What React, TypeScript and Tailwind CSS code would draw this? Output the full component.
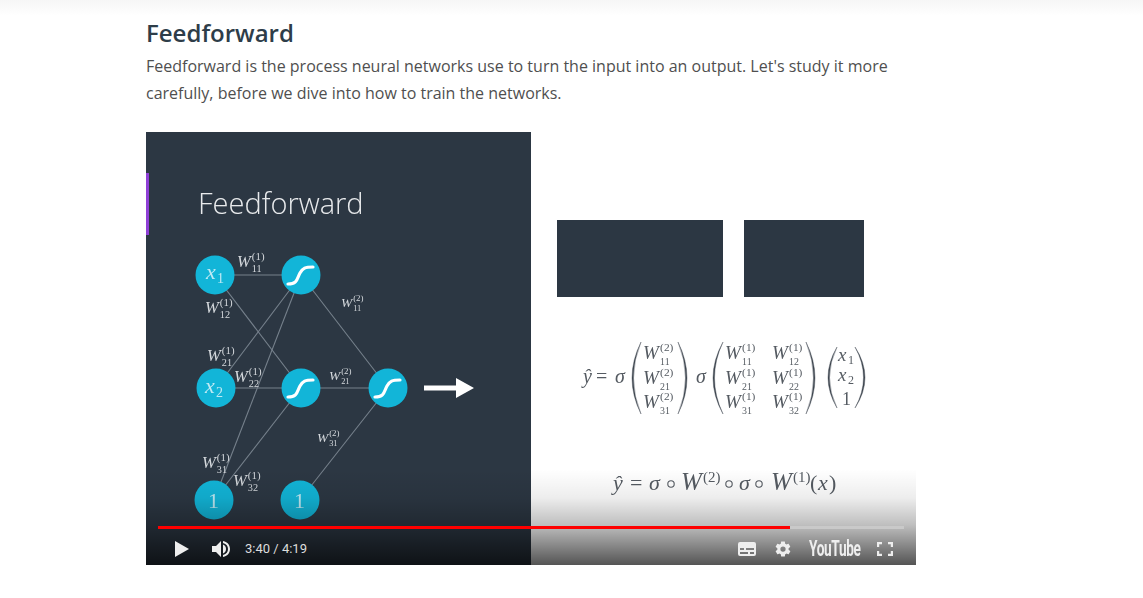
import React from "react";

const mathFont = "'Liberation Serif', 'DejaVu Serif', serif";

function W({ x, y, sub, sup, s = 16.5, fill = "#d5d9dd" }: { x: number; y: number; sub: string; sup: string; s?: number; fill?: string }) {
  const small = s <= 17;
  return (
    <g fontFamily={mathFont} fill={fill}>
      <text x={x} y={y} fontSize={s} fontStyle="italic">W</text>
      <text x={x + s * 0.9} y={y - s * 0.42} fontSize={s * (small ? 0.66 : 0.6)}>({sup})</text>
      <text x={x + s * 0.9} y={y + s * 0.32} fontSize={s * (small ? 0.62 : 0.52)}>{sub}</text>
    </g>
  );
}

function Sigmoid({ cx, cy }: { cx: number; cy: number }) {
  return (
    <path
      d={`M${cx - 13} ${cy + 9} C${cx - 3} ${cy + 9} ${cx - 4} ${cy + 3} ${cx - 1} ${cy - 2} C${cx + 2} ${cy - 7} ${cx + 4} ${cy - 8} ${cx + 12} ${cy - 8}`}
      fill="none"
      stroke="#fff"
      strokeWidth={3.2}
      strokeLinecap="round"
    />
  );
}

function Network() {
  const line = "#76818c";
  const nodes: [number, number][] = [
    [215, 275], [301, 275], [216, 388], [301, 388], [388, 388], [214, 500], [300, 500],
  ];
  const edges: [number, number, number, number][] = [
    [215, 275, 301, 275], [215, 275, 301, 388], [216, 388, 301, 275], [216, 388, 301, 388],
    [214, 500, 301, 275], [214, 500, 301, 388], [301, 275, 388, 388], [301, 388, 388, 388], [300, 500, 388, 388],
  ];
  return (
    <svg viewBox="146 132 385 433" className="absolute inset-0 h-full w-full blur-[0.4px]">
      <text x={198} y={214} fontFamily="'Open Sans', sans-serif" fontWeight={300} fontSize={29} fill="#e8eaec">Feedforward</text>
      {edges.map(([a, b, c, d], i) => (
        <line key={i} x1={a} y1={b} x2={c} y2={d} stroke={line} strokeWidth={1.1} />
      ))}
      {nodes.map(([cx, cy], i) => (
        <circle key={i} cx={cx} cy={cy} r={19.5} fill="#12b5d8" />
      ))}
      <g fontFamily={mathFont} fill="#bfeaf4">
        <text x={206} y={279} fontSize={22} fontStyle="italic">x</text>
        <text x={217} y={283} fontSize={14}>1</text>
        <text x={205} y={393} fontSize={22} fontStyle="italic">x</text>
        <text x={216} y={397} fontSize={14}>2</text>
        <text x={208} y={508} fontSize={22}>1</text>
        <text x={294} y={508} fontSize={22}>1</text>
      </g>
      <Sigmoid cx={301} cy={275} />
      <Sigmoid cx={301} cy={388} />
      <Sigmoid cx={388} cy={388} />
      <path d="M424 385.5H456V378L474 388L456 398V390.5H424Z" fill="#fff" />
      <W x={237} y={267} sub="11" sup="1" />
      <W x={205} y={313} sub="12" sup="1" />
      <W x={207} y={361} sub="21" sup="1" />
      <W x={234} y={382} sub="22" sup="1" />
      <W x={202} y={468} sub="31" sup="1" />
      <W x={233} y={486} sub="32" sup="1" />
      <W x={341} y={307} sub="11" sup="2" s={13.5} />
      <W x={329} y={380} sub="21" sup="2" s={13.5} />
      <W x={317} y={442} sub="31" sup="2" s={13.5} />
    </svg>
  );
}

function Paren({ tip, bulge, y, h }: { tip: number; bulge: number; y: number; h: number }) {
  const outer = 2 * bulge - tip;
  const inner = outer + (tip > bulge ? 3 : -3);
  return (
    <path
      d={`M${tip} ${y} Q${outer} ${y + h / 2} ${tip} ${y + h} Q${inner} ${y + h / 2} ${tip} ${y}Z`}
      fill="#3f4750"
      stroke="#3f4750"
      strokeWidth={0.4}
    />
  );
}

function Formula() {
  const fill = "#555b62";
  const rows = [359, 384, 408];
  const dots = [667, 725, 755];
  return (
    <svg viewBox="531 132 385 433" className="absolute inset-0 h-full w-full blur-[0.4px]">
      <g fontFamily={mathFont} fill={fill}>
        <text x={583} y={383} fontSize={20} fontStyle="italic">ŷ</text>
        <text x={596} y={383} fontSize={20}>=</text>
        <text x={615} y={383} fontSize={20} fontStyle="italic">σ</text>
        <text x={696} y={383} fontSize={20} fontStyle="italic">σ</text>
        <text x={838} y={361} fontSize={19} fontStyle="italic">x</text>
        <text x={848} y={364} fontSize={12}>1</text>
        <text x={838} y={381} fontSize={19} fontStyle="italic">x</text>
        <text x={848} y={384} fontSize={12}>2</text>
        <text x={842} y={405} fontSize={18}>1</text>
        <text x={613} y={490} fontSize={22} fontStyle="italic">ŷ</text>
        <text x={630} y={490} fontSize={22}>=</text>
        <text x={649} y={490} fontSize={22} fontStyle="italic">σ</text>
        <text x={681} y={490} fontSize={25} fontStyle="italic">W</text>
        <text x={703} y={482} fontSize={15}>(2)</text>
        <text x={739} y={490} fontSize={22} fontStyle="italic">σ</text>
        <text x={771} y={490} fontSize={25} fontStyle="italic">W</text>
        <text x={793} y={482} fontSize={15}>(1)</text>
        <text x={810} y={490} fontSize={22}>(</text>
        <text x={818} y={490} fontSize={22} fontStyle="italic">x</text>
        <text x={829} y={490} fontSize={22}>)</text>
      </g>
      {dots.map((cx) => (
        <circle key={cx} cx={cx + 4} cy={484} r={3.2} fill="none" stroke={fill} strokeWidth={1.1} />
      ))}
      <Paren tip={641} bulge={632} y={342} h={72} />
      <Paren tip={678} bulge={687} y={342} h={72} />
      <Paren tip={723} bulge={713} y={342} h={72} />
      <Paren tip={806} bulge={815} y={342} h={72} />
      <Paren tip={837} bulge={828} y={347} h={61} />
      <Paren tip={855} bulge={865} y={347} h={61} />
      {rows.map((y, i) => (
        <React.Fragment key={i}>
          <W x={643} y={y} sub={`${i + 1}1`} sup="2" s={19} fill={fill} />
          <W x={725} y={y} sub={`${i + 1}1`} sup="1" s={19} fill={fill} />
          <W x={772} y={y} sub={`${i + 1}2`} sup="1" s={19} fill={fill} />
        </React.Fragment>
      ))}
    </svg>
  );
}

function Controls() {
  return (
    <div className="absolute inset-x-0 bottom-0 h-[96px] bg-[linear-gradient(to_bottom,rgba(0,0,0,0)_0%,rgba(0,0,0,0.07)_30%,rgba(0,0,0,0.25)_58%,rgba(0,0,0,0.42)_75%,rgba(0,0,0,0.67)_100%)]">
      <div className="absolute bottom-0 left-0 right-0 flex h-[39px] flex-col px-3">
        <div className="flex h-[3px] w-full bg-[#c9c9c9]">
          <div className="h-full w-[632px] bg-[#ff0000]" />
        </div>
        <div className="flex h-[36px] items-center pl-[17px] pr-[11px] pt-[3px]">
          <svg viewBox="0 0 14 16" className="h-4 w-[14px]"><path d="M0 0L14 8L0 16Z" fill="#eee" /></svg>
          <svg viewBox="0 0 18 18" className="ml-[23px] h-[18px] w-[18px]">
            <path d="M0 6H4L9 1V17L4 12H0Z" fill="#eee" />
            <path d="M11 4.500C13 5.300 14 7 14 9S13 12.700 11 13.500Z" fill="#eee" />
            <path d="M11 1V3C14.500 3.800 16 6.500 16 9S14.500 14.200 11 15V17C16 16 18 12.500 18 9S16 2 11 1Z" fill="#eee" />
          </svg>
          <span className="ml-[15px] font-['Roboto',sans-serif] text-[13px] text-[#ddd]">3:40 / 4:19</span>
          <div className="ml-auto flex items-center">
            <svg viewBox="0 0 18 14" className="h-[14px] w-[18px]">
              <path fillRule="evenodd" d="M2 0H16Q18 0 18 2V12Q18 14 16 14H2Q0 14 0 12V2Q0 0 2 0ZM2 6V8H6V6ZM8 6V8H16V6ZM2 10V12H10V10ZM12 10V12H16V10Z" fill="#eee" />
            </svg>
            <svg viewBox="0 0 24 24" className="ml-[18px] h-[18px] w-[18px]">
              <path fillRule="evenodd" d="M19.4 13c.04-.3.1-.7.1-1s-.06-.7-.1-1l2.100-1.600c.2-.15.25-.4.1-.6l-2-3.500c-.1-.2-.4-.3-.6-.2l-2.500 1c-.5-.4-1.100-.7-1.700-1L14.500 2.400c0-.2-.3-.4-.5-.4h-4c-.2 0-.5.2-.5.4L9.100 5.100c-.6.3-1.200.6-1.700 1l-2.500-1c-.2-.1-.5 0-.6.2l-2 3.500c-.1.2-.1.45.1.6L4.500 11c0 .3-.1.7-.1 1s.1.7.1 1l-2.100 1.600c-.2.15-.2.4-.1.6l2 3.500c.1.2.4.3.6.2l2.500-1c.5.4 1.100.7 1.700 1l.4 2.700c0 .2.3.4.5.4h4c.2 0 .5-.2.5-.4l.4-2.700c.6-.3 1.200-.6 1.700-1l2.500 1c.2.1.5 0 .6-.2l2-3.500c.1-.2.1-.45-.1-.6ZM12 15.500a3.500 3.500 0 1 1 0-7 3.500 3.500 0 0 1 0 7Z" fill="#eee" />
            </svg>
            <span className="ml-[17px] inline-block w-[54px] origin-left scale-x-[0.62] whitespace-nowrap font-['Roboto',sans-serif] text-[22px] font-bold tracking-tight text-[#eee]">YouTube</span>
            <svg viewBox="0 0 16 14" className="ml-[14px] h-[14px] w-4" fill="none" stroke="#eee" strokeWidth={2.4}>
              <path d="M1 5V1H5M11 1H15V5M15 9V13H11M5 13H1V9" />
            </svg>
          </div>
        </div>
      </div>
    </div>
  );
}

export default function App() {
  return (
    <div className="h-[598px] w-[1143px] overflow-hidden bg-white font-['Open_Sans',sans-serif]">
      <div className="h-4 bg-gradient-to-b from-[#f6f6f6] to-white" />
      <div className="ml-[146px] w-[770px]">
        <h2 className="text-[24px] font-semibold leading-[33px] text-[#2e3d49]">Feedforward</h2>
        <p className="mt-1 text-[16px] leading-[27px] text-[#4f4f4f]">
          Feedforward is the process neural networks use to turn the input into an output. Let's study it more carefully, before we dive into how to train the networks.
        </p>
        <div className="relative mt-[25px] flex h-[433px] w-[770px] overflow-hidden bg-white">
          <div className="relative h-full w-[385px] bg-[#2c3743]">
            <div className="absolute left-0 top-[41px] h-[62px] w-[3px] bg-[#8e3fd6]" />
            <Network />
          </div>
          <div className="relative h-full w-[385px]">
            <div className="flex gap-[21px] pl-[26px] pt-[88px]">
              <div className="h-[77px] w-[166px] bg-[#2c3743]" />
              <div className="h-[77px] w-[120px] bg-[#2c3743]" />
            </div>
            <Formula />
          </div>
          <Controls />
        </div>
      </div>
    </div>
  );
}
